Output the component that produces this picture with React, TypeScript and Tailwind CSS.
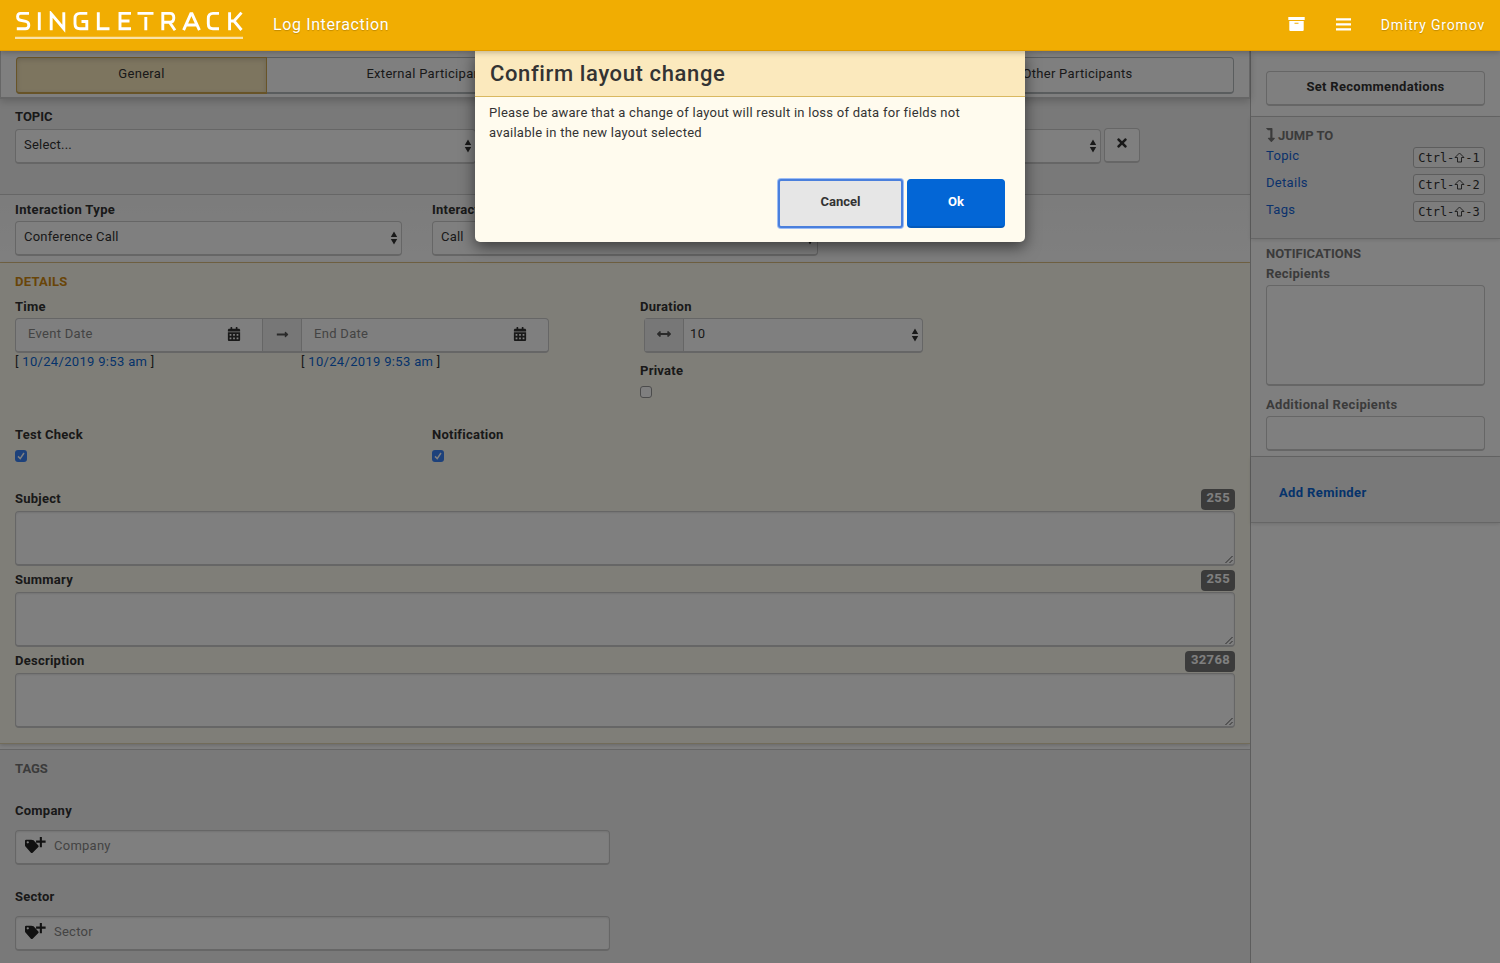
import React from "react";
import {
  FaCalendarAlt, FaLongArrowAltRight, FaArrowsAltH, FaTimes, FaLevelDownAlt,
} from "react-icons/fa";

const Sort = () => (
  <svg width="8" height="14" viewBox="0 0 8 14" className="shrink-0 fill-[#333]">
    <path d="M4 0.5 L7.2 6 H0.8 Z M4 13.5 L7.2 8 H0.8 Z" />
  </svg>
);

const TagPlus = () => (
  <svg width="21" height="18" viewBox="0 0 22 18" className="shrink-0 fill-[#222]">
    <path fillRule="evenodd" d="M0 4.6 Q0 3.4 1.2 3.4 H6.6 L9 4 L14 9.6 Q14.7 10.4 14 11.2 L8 17 Q7 17.8 6.2 17 L0.5 10.6 Q0 10 0 9.2 Z M2.9 5 A1.2 1.2 0 1 0 2.9 7.4 A1.2 1.2 0 1 0 2.9 5 Z" />
    <path d="M15.5 0.6 H17.7 V4.4 H21.6 V6.6 H17.7 V11.4 H15.5 V6.6 H11.6 V4.4 H15.5 Z" />
  </svg>
);

const Archive = () => (
  <svg width="17" height="15" viewBox="0 0 17 15" fill="#fff">
    <path fillRule="evenodd" d="M0.3 0 H16.7 V3 H0.3 Z M1.3 4 H15.7 V13 Q15.7 14 14.7 14 H2.3 Q1.3 14 1.3 13 Z M6.5 5.8 V6.8 H10.5 V5.8 Z" />
  </svg>
);

const Menu = () => (
  <svg width="15" height="13" viewBox="0 0 15 13" fill="#fff">
    <path d="M0 0.3 H15 V2.6 H0 Z M0 5.3 H15 V7.6 H0 Z M0 10.3 H15 V12.6 H0 Z" />
  </svg>
);

const Logo = () => (
  <svg width="228" height="29" viewBox="0 0 228 29" className="block">
    <g fill="none" stroke="#fff" strokeWidth="2.9">
      <path d="M14 2.4 H5.5 Q2.6 2.4 2.6 5.5 Q2.6 8.8 5.5 9.3 L10.8 10.3 Q13.8 10.9 13.8 14.2 Q13.8 17.8 10.3 17.8 H1.8" />
      <path d="M24.3 1.2 V19.2" />
      <path d="M36.2 19.2 V2.8 L48.8 17.8 V1.2" />
      <path d="M72.3 2.4 H65 Q60 2.4 60 7.5 V12.8 Q60 17.8 65 17.8 H71.8 V10.5 H66.5" />
      <path d="M83.3 1.2 V17.8 H94.5" />
      <path d="M116 2.4 H105 V17.8 H116 M105 10 H114.5" />
      <path d="M122.5 2.4 H138.5 M130.8 6 V19.2" />
      <path d="M147.8 19.2 V2.4 H155 Q158.8 2.4 158.8 6.8 Q158.8 11.2 155 11.2 H148 M154.5 11.2 L160 19.2" />
      <path d="M168.6 19.2 L175.8 2.8 H177 L184.4 19.2 M171.8 14 H181.5" />
      <path d="M204 2.4 H198 Q193.3 2.4 193.3 7.5 V12.8 Q193.3 17.8 198 17.8 H204" />
      <path d="M214.6 1.2 V19.2 M226.5 1.6 L219 10 L226.5 19 M214.6 10 H219" />
    </g>
    <path d="M0 25.8 H228 V28 H0 Z" fill="#fff" fillOpacity=".65" />
  </svg>
);

const box = "rounded-[4px] border border-[#ccc] border-b-2 bg-white";
const label = "block text-[13px] font-bold leading-5 tracking-[.25px]";

const Select = ({ text, className }: { text: string; className: string }) => (
  <div className={"flex h-[35px] items-center justify-between pl-2 pr-[3px] " + box + " " + className}>
    <span className="-mt-[3px] text-[13px] tracking-[.22px]">{text}</span>
    <Sort />
  </div>
);

const Check = ({ on }: { on?: boolean }) => (
  <div className={"flex h-3 w-3 items-center justify-center rounded-[3px] " + (on ? "bg-[#3a82f7]" : "border border-[#999] bg-white")}>
    {on && (
      <svg width="10" height="10" viewBox="0 0 10 10" fill="none" stroke="#fff" strokeWidth="1.5">
        <path d="M2 5.4 L4.2 7.6 L8 2" />
      </svg>
    )}
  </div>
);

const Area = ({ name, count }: { name: string; count: string }) => (
  <div className="h-[81px]">
    <div className="flex h-[22px] items-start justify-between">
      <span className={label}>{name}</span>
      <span className="h-[21px] rounded-[4px] bg-[#777] pl-[6px] pr-[5px] text-[13px] font-bold leading-[18px] tracking-[.35px] text-white">{count}</span>
    </div>
    <div className={"flex h-[55px] items-end justify-end pr-px shadow-[inset_0_1px_2px_#0000001a] " + box}>
      <svg width="8" height="9" viewBox="0 0 8 9" stroke="#444" fill="none" strokeWidth=".9">
        <path d="M0.5 8 L7.5 1 M4.5 8 L7.5 5" />
      </svg>
    </div>
  </div>
);

const TagField = ({ name }: { name: string }) => (
  <div className="h-[86px]">
    <span className={label}>{name}</span>
    <div className={"mt-[9px] flex h-[35px] w-[595px] items-center pl-[9px] shadow-[inset_0_1px_2px_#0000001a] " + box}>
      <div className="-mt-[4px]"><TagPlus /></div>
      <span className="-mt-[3px] ml-2 text-[13px] tracking-[.25px] text-[#888]">{name}</span>
    </div>
  </div>
);

const DateStamp = () => (
  <span className="w-[286px] text-[13px] leading-[18px] tracking-[.32px]">
    [ <span className="text-[#0a66d6]">10/24/2019 9:53 am</span> ]
  </span>
);

const Jump = ({ name, n }: { name: string; n: string }) => (
  <div className="flex h-[27px] items-start justify-between">
    <span className="text-[13px] leading-5 tracking-[.3px] text-[#1565d8]">{name}</span>
    <span className="mt-px flex h-[21px] w-[72px] items-center justify-center rounded-[3px] border border-[#bbb] bg-[#fafafa] font-['DejaVu_Sans_Mono',monospace] text-[12px]">
      Ctrl-
      <svg width="11" height="11" viewBox="0 0 11 11" fill="none" stroke="#333" strokeWidth=".9"><path d="M5.5 1 L10 5.5 H7.5 V10 H3.5 V5.5 H1 Z" /></svg>
      -{n}
    </span>
  </div>
);

export default function App() {
  return (
    <div className="relative flex h-[963px] w-[1500px] flex-col overflow-hidden bg-white font-[Roboto,sans-serif] text-[#333]">
      <header className="relative z-30 flex h-[51px] shrink-0 items-start border-b border-[#e09c00] bg-[#f1ad02] pl-[15px] pr-[15px] text-white shadow-[0_1px_6px_#0004]">
        <div className="mt-[11px]"><Logo /></div>
        <span className="ml-[30px] mt-[13px] text-[16px] leading-6 tracking-[.62px] [text-shadow:0_1px_1px_#0003]">Log Interaction</span>
        <div className="ml-auto flex h-[48px] items-center">
          <Archive />
          <span className="ml-[31px]"><Menu /></span>
          <span className="ml-[30px] mt-[2px] text-[14px] tracking-[.82px] [text-shadow:0_1px_1px_#0003]">Dmitry Gromov</span>
        </div>
      </header>

      <div className="flex min-h-0 flex-1">
        <main className="flex w-[1250px] flex-col">
          <div className="relative z-10 h-[48px] shrink-0 border border-t-0 border-b-2 border-[#ccc] bg-white px-[15px] pt-[6px] shadow-[0_2px_8px_#0003]">
            <div className="flex h-[37px] w-[1218px] rounded-[4px] border border-b-2 border-[#b5babd] text-center text-[13px] leading-[31px] tracking-[.3px]">
              <div className="-ml-px -mt-px h-[37px] w-[251px] shrink-0 rounded-l-[4px] border border-b-2 border-[#d0a850] bg-[#faeabf] shadow-[inset_0_2px_5px_#0002]">General</div>
              <div className="w-[325px]">External Participants</div>
              <div className="w-[330px]">Internal Participants</div>
              <div className="flex-1">Other Participants</div>
            </div>
          </div>
          <section className="h-[96px] shrink-0 border-b border-[#ccc] bg-[#f2f2f2] px-[15px] pt-2">
            <span className={label + " tracking-normal"}>TOPIC</span>
            <div className="mt-[2px] flex">
              <Select text="Select..." className="w-[461px]" />
              <Select text="Select..." className="ml-[163px] w-[462px]" />
              <div className={"-mt-px ml-[3px] flex h-[35px] w-[36px] items-center justify-center pb-[4px] " + box}><FaTimes size={14} /></div>
            </div>
          </section>
          <section className="h-[68px] shrink-0 border-b border-[#e7c98a] bg-gradient-to-b from-[#f8f8f8] to-white px-[15px] pt-[5px]">
            <div className="flex">
              <div className="w-[417px]">
                <span className={label + " tracking-[.35px]"}>Interaction Type</span>
                <Select text="Conference Call" className="mt-px w-[387px]" />
              </div>
              <div>
                <span className={label}>Interaction Subtype</span>
                <Select text="Call" className="mt-px w-[386px]" />
              </div>
            </div>
          </section>
          <section className="h-[481px] shrink-0 border-b border-[#e5d8b5] bg-[#fffdf0] px-[15px] pt-[9px] shadow-[0_1px_4px_#0003]">
            <span className="block h-[25px] text-[13px] font-bold leading-5 tracking-[.25px] text-[#d28a10]">DETAILS</span>
            <div className="flex h-[128px]">
              <div className="w-[625px]">
                <span className={label}>Time</span>
                <div className={"mt-px flex h-[35px] w-[534px] items-stretch text-[13px] tracking-[.3px] text-[#888] " + box}>
                  <div className="flex w-[246px] items-center justify-between pb-[3px] pl-3 pr-[21px]">Event Date<FaCalendarAlt size={14} className="text-[#333]" /></div>
                  <div className="flex w-[40px] items-center justify-center border-x border-[#ccc] bg-[#eee] pb-[2px] text-[#555]"><FaLongArrowAltRight size={13} /></div>
                  <div className="flex flex-1 items-center justify-between pb-[3px] pl-3 pr-[21px]">End Date<FaCalendarAlt size={14} className="text-[#333]" /></div>
                </div>
                <div className="flex"><DateStamp /><DateStamp /></div>
              </div>
              <div>
                <span className={label}>Duration</span>
                <div className={"ml-1 mt-px flex h-[35px] w-[279px] items-stretch " + box}>
                  <div className="flex w-[39px] items-center justify-center border-r border-[#ccc] bg-[#eee] pb-[2px] text-[#555]"><FaArrowsAltH size={14} /></div>
                  <div className="flex flex-1 items-center justify-between pl-[6px] pr-[3px]"><span className="-mt-[3px] text-[13px] tracking-[.4px]">10</span><Sort /></div>
                </div>
                <span className={label + " mb-[5px] mt-2 tracking-[.5px]"}>Private</span>
                <Check />
              </div>
            </div>
            <div className="flex h-[64px]">
              <div className="w-[417px]"><span className={label + " mb-[5px]"}>Test Check</span><Check on /></div>
              <div><span className={label + " mb-[5px]"}>Notification</span><Check on /></div>
            </div>
            <Area name="Subject" count="255" />
            <Area name="Summary" count="255" />
            <Area name="Description" count="32768" />
          </section>
          <section className="mt-[5px] flex-1 border-t border-[#ccc] bg-[#f2f2f2] px-[15px] pt-[9px]">
            <span className="block h-[42px] text-[13px] font-bold leading-5 text-[#777]">TAGS</span>
            <TagField name="Company" />
            <TagField name="Sector" />
          </section>
        </main>

        <aside className="flex w-[250px] flex-col border-l border-[#bbb] bg-white">
          <div className="h-[66px] shrink-0 border-b border-[#ccc] px-[15px] pt-5">
            <div className={"h-[35px] text-center text-[13px] font-bold leading-[30px] tracking-[.3px] " + box}>Set Recommendations</div>
          </div>
          <div className="h-[122px] shrink-0 border-b border-[#ccc] bg-[#f2f2f2] px-[15px] pt-[9px] shadow-[0_1px_4px_#0002]">
            <div className="flex h-5 items-center gap-[3px] text-[13px] font-bold text-[#777]"><FaLevelDownAlt size={14} className="mb-[2px] w-[9px]" />JUMP TO</div>
            <Jump name="Topic" n="1" /><Jump name="Details" n="2" /><Jump name="Tags" n="3" />
          </div>
          <div className="h-[218px] shrink-0 border-b border-[#ccc] px-[15px] pt-[5px] text-[#777]">
            <span className="block text-[13px] font-bold leading-5">NOTIFICATIONS</span>
            <span className={label}>Recipients</span>
            <div className={"mt-px h-[101px] " + box} />
            <span className={label + " mt-[9px] tracking-[.33px]"}>Additional Recipients</span>
            <div className={"mt-px h-[35px] " + box} />
          </div>
          <div className="h-[66px] shrink-0 border-b border-[#ccc] bg-[#f2f2f2] pl-7 pt-[26px] text-[13px] font-bold leading-5 tracking-[.38px] text-[#0a66d6] shadow-[0_1px_4px_#0002]">Add Reminder</div>
        </aside>
      </div>

      <div className="absolute inset-0 z-20 flex items-start justify-center bg-black/50 pt-[51px]">
        <div className="flex h-[191px] w-[550px] flex-col overflow-hidden rounded-b-[5px] bg-[#fffbee] shadow-[0_5px_15px_#0008]">
          <div className="h-[46px] shrink-0 border-b border-[#d9b860] bg-[#fbe9bd] pl-[15px] text-[22px] font-medium leading-[46px] tracking-[.62px]">Confirm layout change</div>
          <p className="whitespace-nowrap px-[14px] pt-[6px] text-[13px] leading-5 tracking-[.26px]">
            Please be aware that a change of layout will result in loss of data for fields not<br />available in the new layout selected
          </p>
          <div className="mt-[36px] flex justify-end gap-[4px] pr-5 text-center text-[13px] font-bold">
            <div className="h-[49px] w-[125px] rounded-[3px] border-2 border-[#4a7fdc] bg-[#e6e6e6] leading-[42px] shadow-[0_0_0_1px_#9dbdf5]">Cancel</div>
            <div className="h-[49px] w-[98px] rounded-[4px] border border-b-2 border-[#0366d6] border-b-[#0359bb] bg-[#0366d6] leading-[44px] text-white">Ok</div>
          </div>
        </div>
      </div>
    </div>
  );
}
